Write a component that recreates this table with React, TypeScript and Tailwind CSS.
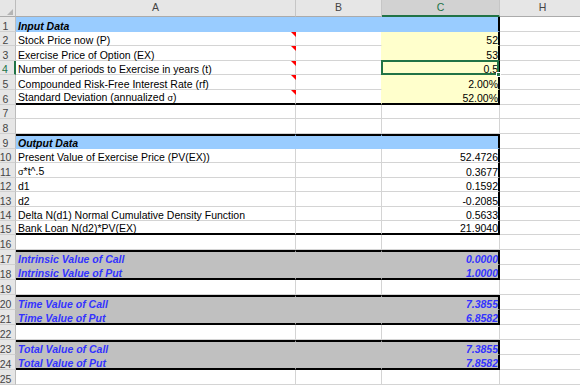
import React from 'react';

type Fill = 'none' | 'blue' | 'yellow' | 'gray';

const fillBg: Record<Fill, string> = {
  none: 'bg-white',
  blue: 'bg-[#99ccff]',
  yellow: 'bg-[#ffffcc]',
  gray: 'bg-[#c0c0c0]',
};
const borderR: Record<Fill | 'thick', string> = {
  none: 'border-r border-r-[#d4d4d4]',
  blue: 'border-r border-r-[#99ccff]',
  yellow: 'border-r border-r-[#ffffcc]',
  gray: 'border-r border-r-[#c0c0c0]',
  thick: 'border-r-2 border-r-black',
};
const borderB: Record<Fill | 'thick', string> = {
  none: 'border-b border-b-[#d4d4d4]',
  blue: 'border-b border-b-[#99ccff]',
  yellow: 'border-b border-b-[#ffffcc]',
  gray: 'border-b border-b-[#c0c0c0]',
  thick: 'border-b-2 border-b-black',
};

interface RowSpec {
  n: number;
  h: string;
  a?: React.ReactNode;
  c?: string;
  aFill?: Fill;
  cFill?: Fill;
  top?: boolean;
  bottom?: boolean;
  right?: boolean;
  tri?: boolean;
  style?: 'plain' | 'title' | 'blue';
  sel?: boolean;
}

const H15 = 'h-[15px]';
const H14 = 'h-[14px]';

const Sig = () => <span className="text-[9px]">σ</span>;

const rows: RowSpec[] = [
  { n: 1, h: H15, a: 'Input Data', aFill: 'blue', cFill: 'blue', right: true, style: 'title' },
  { n: 2, h: H14, a: 'Stock Price now (P)', cFill: 'yellow', c: '52', right: true, tri: true },
  { n: 3, h: H15, a: 'Exercise Price of Option (EX)', cFill: 'yellow', c: '53', right: true, tri: true },
  { n: 4, h: H14, a: 'Number of periods to Exercise in years (t)', cFill: 'yellow', c: '0.5', right: true, tri: true, sel: true },
  { n: 5, h: H15, a: 'Compounded Risk-Free Interest Rate (rf)', cFill: 'yellow', c: '2.00%', right: true, tri: true },
  {
    n: 6, h: H15,
    a: (<>Standard Deviation (annualized&nbsp;<Sig />)</>),
    cFill: 'yellow', c: '52.00%', right: true, tri: true, bottom: true,
  },
  { n: 7, h: H14 },
  { n: 8, h: H15 },
  { n: 9, h: H15, a: 'Output Data', aFill: 'blue', cFill: 'blue', right: true, top: true, style: 'title' },
  { n: 10, h: H14, a: 'Present Value of Exercise Price (PV(EX))', c: '52.4726', right: true },
  { n: 11, h: H15, a: (<><Sig />*t^.5</>), c: '0.3677', right: true },
  { n: 12, h: H14, a: 'd1', c: '0.1592', right: true },
  { n: 13, h: H15, a: 'd2', c: '-0.2085', right: true },
  { n: 14, h: H14, a: 'Delta N(d1) Normal Cumulative Density Function', c: '0.5633', right: true },
  { n: 15, h: H14, a: 'Bank Loan  N(d2)*PV(EX)', c: '21.9040', right: true, bottom: true },
  { n: 16, h: H15 },
  { n: 17, h: H15, a: 'Intrinsic Value of Call', c: '0.0000', aFill: 'gray', cFill: 'gray', right: true, top: true, style: 'blue' },
  { n: 18, h: H15, a: 'Intrinsic Value of Put', c: '1.0000', aFill: 'gray', cFill: 'gray', right: true, bottom: true, style: 'blue' },
  { n: 19, h: H15 },
  { n: 20, h: H15, a: 'Time Value of Call', c: '7.3855', aFill: 'gray', cFill: 'gray', right: true, top: true, style: 'blue' },
  { n: 21, h: H15, a: 'Time Value of Put', c: '6.8582', aFill: 'gray', cFill: 'gray', right: true, bottom: true, style: 'blue' },
  { n: 22, h: H15 },
  { n: 23, h: H15, a: 'Total Value of Call', c: '7.3855', aFill: 'gray', cFill: 'gray', right: true, top: true, style: 'blue' },
  { n: 24, h: H15, a: 'Total Value of Put', c: '7.8582', aFill: 'gray', cFill: 'gray', right: true, bottom: true, style: 'blue' },
  { n: 25, h: H15 },
];

function textCls(style?: RowSpec['style']) {
  if (style === 'title') return 'font-bold italic text-black';
  if (style === 'blue') return 'font-bold italic text-[#3333ff]';
  return 'text-black';
}

function SheetRow({ r }: { r: RowSpec }) {
  const aFill: Fill = r.aFill ?? 'none';
  const cFill: Fill = r.cFill ?? 'none';

  const bottomA = r.bottom ? borderB.thick : aFill !== 'none' ? borderB[aFill] : borderB.none;
  const bottomC = r.bottom ? borderB.thick : cFill !== 'none' ? borderB[cFill] : borderB.none;
  const topCls = r.top ? 'border-t-2 border-t-black' : '';
  const rightA = aFill !== 'none' ? borderR[aFill] : borderR.none;
  const rightB = aFill !== 'none' ? borderR[aFill] : cFill !== 'none' ? borderR[cFill] : borderR.none;
  const rightC = r.right ? borderR.thick : borderR.none;
  const txt = textCls(r.style);

  return (
    <div className={`flex ${r.h} shrink-0`}>
      <div
        className={`w-[16px] shrink-0 flex items-end justify-center pr-[4px] leading-none text-[10.5px] bg-[#e6e6e6] border-b border-b-[#d0d0d0] ${
          r.sel ? 'border-r-2 border-r-[#217346] bg-[#d2d2d2] text-[#217346]' : 'border-r border-r-[#bcbcbc] text-[#444]'
        }`}
      >
        <span className="whitespace-nowrap">{r.n}</span>
      </div>
      <div
        className={`relative w-[280px] shrink-0 flex items-end pl-[2px] leading-none text-[10.5px] whitespace-nowrap ${fillBg[aFill]} ${rightA} ${bottomA} ${topCls} ${txt}`}
      >
        <span>{r.a}</span>
        {r.tri && (
          <div className="absolute right-[-1px] top-0 w-0 h-0 border-l-[5px] border-l-transparent border-t-[5px] border-t-[#ff0000]" />
        )}
      </div>
      <div className={`w-[86px] shrink-0 ${fillBg[aFill]} ${rightB} ${bottomA} ${topCls}`} />
      <div
        className={`relative w-[118px] shrink-0 flex items-end justify-end pr-0 leading-none text-[10.5px] whitespace-nowrap ${fillBg[cFill]} ${rightC} ${bottomC} ${topCls} ${txt}`}
      >
        <span>{r.c}</span>
        {r.sel && (
          <div className="absolute z-10 left-[-1px] top-[-1px] right-[-1px] bottom-[-1px] border-2 border-[#217346]">
            <div className="absolute right-[-4px] bottom-[-4px] w-[5px] h-[5px] bg-[#217346] border border-white" />
          </div>
        )}
      </div>
      <div className="w-[86px] shrink-0 border-r border-r-[#d4d4d4] border-b border-b-[#d4d4d4] bg-white" />
    </div>
  );
}

export default function App() {
  return (
    <div className="w-[580px] h-[386px] overflow-hidden bg-white" style={{ fontFamily: '"Liberation Sans", Arial, sans-serif' }}>
      <div className="flex flex-col">
        <div className="flex h-[17px] shrink-0 text-[10.5px] text-[#444]">
          <div className="relative w-[16px] shrink-0 bg-[#e6e6e6] border-r border-r-[#bcbcbc] border-b border-b-[#ababab]">
            <div className="absolute right-[2px] bottom-[1px] w-0 h-0 border-l-[6px] border-l-transparent border-b-[6px] border-b-[#b4b4b4]" />
          </div>
          <div className="w-[280px] shrink-0 flex items-center justify-center bg-[#e6e6e6] border-r border-r-[#c6c6c6] border-b border-b-[#ababab]">A</div>
          <div className="w-[86px] shrink-0 flex items-center justify-center bg-[#e6e6e6] border-r border-r-[#c6c6c6] border-b border-b-[#ababab]">B</div>
          <div className="w-[118px] shrink-0 flex items-center justify-center bg-[#d2d2d2] text-[#217346] border-r border-r-[#c6c6c6] border-b-2 border-b-[#217346]">C</div>
          <div className="w-[86px] shrink-0 flex items-center justify-center bg-[#e6e6e6] border-r border-r-[#c6c6c6] border-b border-b-[#ababab]">H</div>
        </div>
        {rows.map((r) => (
          <SheetRow key={r.n} r={r} />
        ))}
      </div>
    </div>
  );
}
